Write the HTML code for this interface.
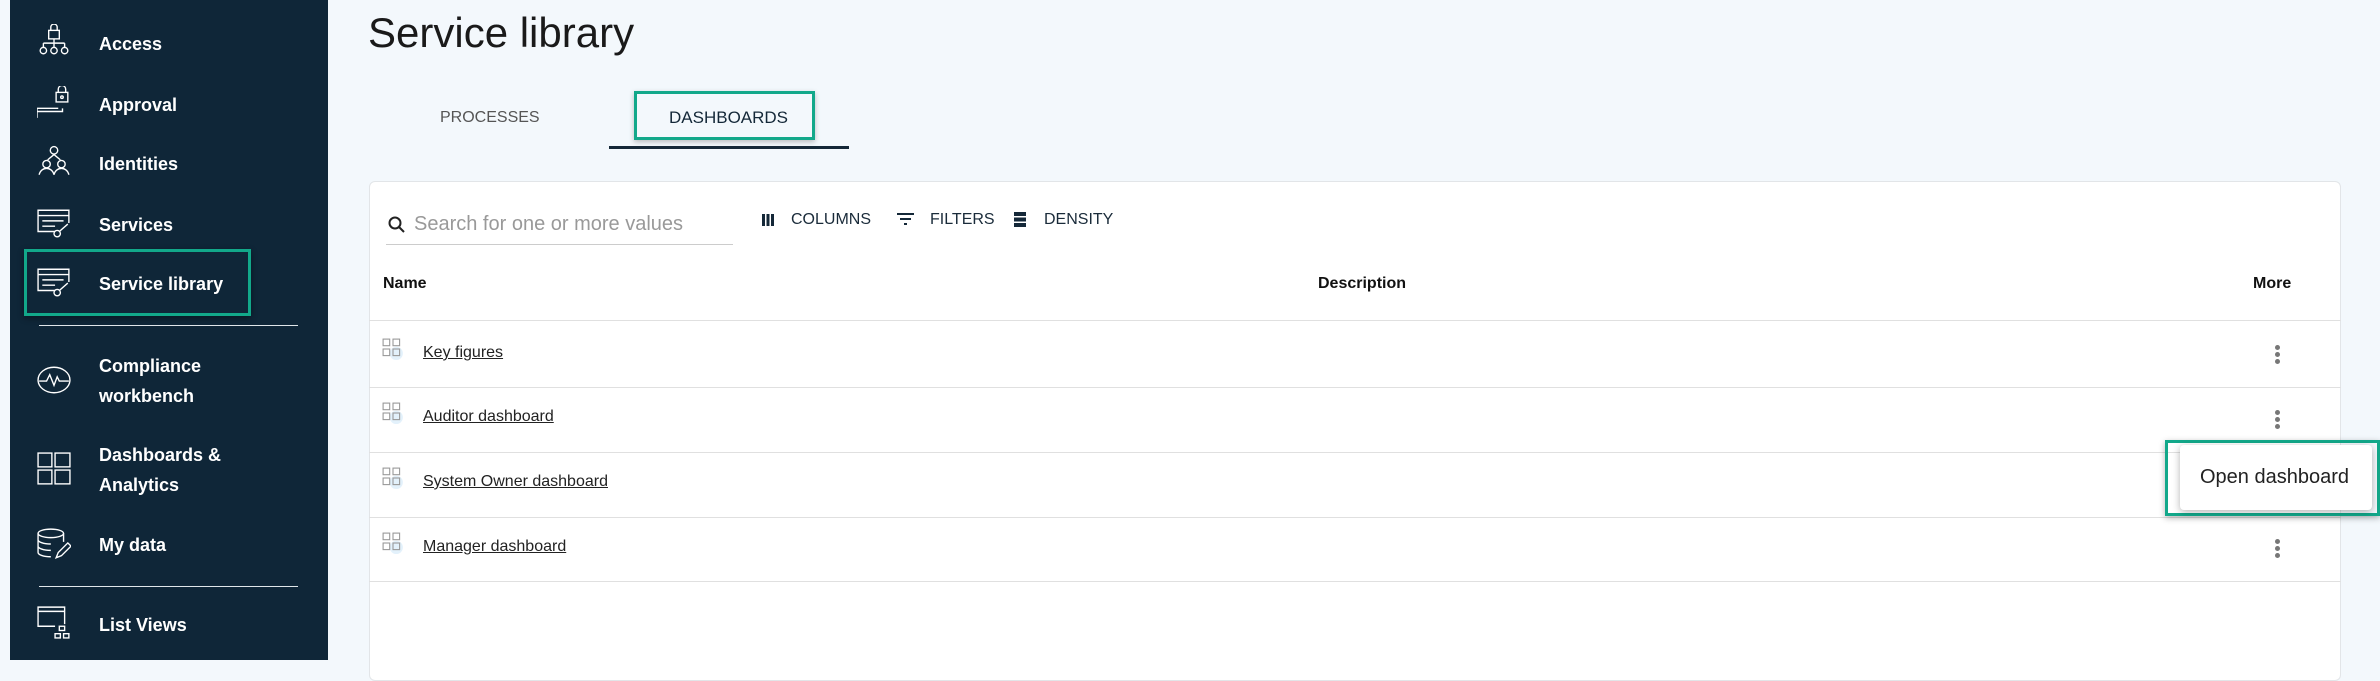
<!DOCTYPE html>
<html><head><meta charset="utf-8"><style>
*{margin:0;padding:0;box-sizing:border-box}
body{width:2380px;height:660px;overflow:hidden;background:#f3f8fc;font-family:"Liberation Sans",sans-serif;position:relative}
.sb{position:absolute;left:10px;top:0;width:318px;height:660px;background:#0f2638}
.it{position:absolute;left:89px;color:#fff;font-size:18px;font-weight:bold;line-height:30px}
.ic{position:absolute;left:27px;width:34px;height:34px}
.hr{position:absolute;left:29px;width:259px;height:1px;background:#e0e6ea}
.abs{position:absolute}
.card{position:absolute;left:369px;top:181px;width:1972px;height:500px;background:#fff;border:1px solid #e2e5e8;border-radius:6px}
.row{position:absolute;left:369px;width:1972px;height:1px;background:#e0e0e0}
.lnk{position:absolute;left:423px;font-size:16px;color:#222;text-decoration:underline}
.gi{position:absolute;left:382px;width:22px;height:22px}
.keb{position:absolute;left:2275px;width:6px}
.keb i{display:block;width:5px;height:5px;border-radius:50%;background:#777;margin-bottom:2px}
.tb{position:absolute;top:211px;font-size:16px;color:#1a2b3a}
.hd{position:absolute;top:275px;font-size:16px;font-weight:bold;color:#111}
</style></head><body>
<div class="sb">
<svg class="ic" style="top:24px" viewBox="0 0 32 32" fill="none" stroke="#fff" stroke-width="1.3"><rect x="11" y="6" width="10" height="8"/><path d="M13 6V3a3 3 0 0 1 6 0v3M16 14v4M6 18h20M6 18v4M16 18v4M26 18v4"/><circle cx="6" cy="25" r="3"/><circle cx="16" cy="25" r="3"/><circle cx="26" cy="25" r="3"/></svg>
<div class="it" style="top:29px">Access</div>
<svg class="ic" style="top:86px" viewBox="0 0 32 32" fill="none" stroke="#fff" stroke-width="1.3"><rect x="18" y="6" width="11" height="9"/><path d="M20 6V3a3.5 3.5 0 0 1 7 0v3M0 30V21h20M0 24h24v-3"/><circle cx="23.5" cy="10.5" r="1.2"/></svg>
<div class="it" style="top:90px">Approval</div>
<svg class="ic" style="top:145px" viewBox="0 0 32 32" fill="none" stroke="#fff" stroke-width="1.3"><circle cx="16" cy="5" r="3.5"/><circle cx="9" cy="18" r="3.5"/><circle cx="23" cy="18" r="3.5"/><path d="M16 9l-6 5M16 9l6 5M2 28c1-4 4-6 7-6s6 2 7 6M16 28c1-4 4-6 7-6s6 2 7 6"/></svg>
<div class="it" style="top:149px">Identities</div>
<svg class="ic" style="top:206px" viewBox="0 0 32 32" fill="none" stroke="#fff" stroke-width="1.3"><path d="M30 16V4H1v20h16M1 9h29M5 14h20M5 19h12"/><circle cx="19" cy="26" r="3"/><path d="M21 24l8-7"/></svg>
<div class="it" style="top:210px">Services</div>
<div class="abs" style="left:14px;top:249px;width:227px;height:67px;border:3px solid #12a88a;box-shadow:0 2px 6px rgba(0,0,0,.4)"></div>
<svg class="ic" style="top:265px" viewBox="0 0 32 32" fill="none" stroke="#fff" stroke-width="1.3"><path d="M30 16V4H1v20h16M1 9h29M5 14h20M5 19h12"/><circle cx="19" cy="26" r="3"/><path d="M21 24l8-7"/></svg>
<div class="it" style="top:269px">Service library</div>
<div class="hr" style="top:325px"></div>
<svg class="ic" style="top:363px" viewBox="0 0 32 32" fill="none" stroke="#fff" stroke-width="1.3"><ellipse cx="16" cy="16" rx="15" ry="12"/><path d="M2 17h7l3-6 4 10 3-8 2 4h9"/></svg>
<div class="it" style="top:351px">Compliance<br>workbench</div>
<svg class="ic" style="top:452px" viewBox="0 0 32 32" fill="none" stroke="#fff" stroke-width="1.3"><rect x="1" y="1" width="13" height="13"/><rect x="17" y="1" width="14" height="13"/><rect x="1" y="17" width="13" height="13"/><rect x="17" y="17" width="14" height="13"/></svg>
<div class="it" style="top:440px">Dashboards &amp;<br>Analytics</div>
<svg class="ic" style="top:527px" viewBox="0 0 32 32" fill="none" stroke="#fff" stroke-width="1.3"><ellipse cx="13" cy="6" rx="12" ry="4"/><path d="M1 6v18c0 2 5 4 12 4M25 6v8M1 12c0 2 5 4 12 4M1 18c0 2 5 4 12 4M18 29l2-5 9-9 3 3-9 9z"/></svg>
<div class="it" style="top:530px">My data</div>
<div class="hr" style="top:586px"></div>
<svg class="ic" style="top:605px" viewBox="0 0 32 32" fill="none" stroke="#fff" stroke-width="1.3"><path d="M26 18V2H1v18h16M1 6h25"/><rect x="21" y="20" width="5" height="4"/><rect x="17" y="27" width="5" height="4"/><rect x="25" y="27" width="5" height="4"/></svg>
<div class="it" style="top:610px">List Views</div>
</div>

<div class="abs" style="left:368px;top:9px;font-size:42px;color:#1a1a1a">Service library</div>
<div class="abs" style="left:440px;top:109px;font-size:16px;color:#555">PROCESSES</div>
<div class="abs" style="left:669px;top:108px;font-size:17px;color:#142838">DASHBOARDS</div>
<div class="abs" style="left:634px;top:91px;width:181px;height:49px;border:3px solid #12a88a;box-shadow:0 2px 5px rgba(0,0,0,.25)"></div>
<div class="abs" style="left:609px;top:146px;width:240px;height:3px;background:#142838"></div>

<div class="card"></div>
<svg class="abs" style="left:388px;top:216px" width="18" height="18" viewBox="0 0 18 18" fill="none" stroke="#222" stroke-width="2"><circle cx="7" cy="7" r="5.5"/><path d="M11 11l5 5"/></svg>
<div class="abs" style="left:414px;top:213px;font-size:20px;color:#999">Search for one or more values</div>
<div class="abs" style="left:386px;top:244px;width:347px;height:1px;background:#ccc"></div>
<svg class="abs" style="left:762px;top:214px" width="12" height="12"><rect x="0" y="0" width="3" height="12" fill="#142838"/><rect x="4.5" y="0" width="3" height="12" fill="#142838"/><rect x="9" y="0" width="3" height="12" fill="#142838"/></svg>
<div class="tb" style="left:791px">COLUMNS</div>
<svg class="abs" style="left:897px;top:213px" width="17" height="14"><rect x="0" y="0" width="17" height="2" fill="#142838"/><rect x="3" y="5" width="11" height="2" fill="#142838"/><rect x="7" y="10" width="3" height="2" fill="#142838"/></svg>
<div class="tb" style="left:930px">FILTERS</div>
<svg class="abs" style="left:1014px;top:212px" width="12" height="15"><rect y="0" width="12" height="4" fill="#142838"/><rect y="5.5" width="12" height="4" fill="#142838"/><rect y="11" width="12" height="4" fill="#142838"/></svg>
<div class="tb" style="left:1044px">DENSITY</div>

<div class="hd" style="left:383px">Name</div>
<div class="hd" style="left:1318px">Description</div>
<div class="hd" style="left:2253px">More</div>

<div class="row" style="top:320px"></div>
<div class="row" style="top:387px"></div>
<div class="row" style="top:452px"></div>
<div class="row" style="top:517px"></div>
<div class="row" style="top:581px"></div>

<svg class="gi" style="top:338px" viewBox="0 0 20 20"><circle cx="13" cy="14" r="6" fill="#e3f1fb"/><g fill="none" stroke="#999" stroke-width="1"><rect x="1" y="1" width="6" height="6"/><rect x="10" y="1" width="6" height="6"/><rect x="1" y="10" width="6" height="6"/><rect x="10" y="10" width="6" height="6"/></g></svg>
<div class="lnk" style="top:344px">Key figures</div>
<div class="keb" style="top:345px"><i></i><i></i><i></i></div>
<svg class="gi" style="top:402px" viewBox="0 0 20 20"><circle cx="13" cy="14" r="6" fill="#e3f1fb"/><g fill="none" stroke="#999" stroke-width="1"><rect x="1" y="1" width="6" height="6"/><rect x="10" y="1" width="6" height="6"/><rect x="1" y="10" width="6" height="6"/><rect x="10" y="10" width="6" height="6"/></g></svg>
<div class="lnk" style="top:408px">Auditor dashboard</div>
<div class="keb" style="top:410px"><i></i><i></i><i></i></div>
<svg class="gi" style="top:467px" viewBox="0 0 20 20"><circle cx="13" cy="14" r="6" fill="#e3f1fb"/><g fill="none" stroke="#999" stroke-width="1"><rect x="1" y="1" width="6" height="6"/><rect x="10" y="1" width="6" height="6"/><rect x="1" y="10" width="6" height="6"/><rect x="10" y="10" width="6" height="6"/></g></svg>
<div class="lnk" style="top:473px">System Owner dashboard</div>
<svg class="gi" style="top:532px" viewBox="0 0 20 20"><circle cx="13" cy="14" r="6" fill="#e3f1fb"/><g fill="none" stroke="#999" stroke-width="1"><rect x="1" y="1" width="6" height="6"/><rect x="10" y="1" width="6" height="6"/><rect x="1" y="10" width="6" height="6"/><rect x="10" y="10" width="6" height="6"/></g></svg>
<div class="lnk" style="top:538px">Manager dashboard</div>
<div class="keb" style="top:539px"><i></i><i></i><i></i></div>

<div class="abs" style="left:2165px;top:440px;width:215px;height:76px;border:3px solid #12a88a;box-shadow:0 2px 6px rgba(0,0,0,.3)"></div>
<div class="abs" style="left:2180px;top:445px;width:192px;height:65px;background:#fff;border-radius:4px;box-shadow:0 2px 8px rgba(0,0,0,.3)"></div>
<div class="abs" style="left:2200px;top:466px;font-size:20px;color:#222">Open dashboard</div>
</body></html>
